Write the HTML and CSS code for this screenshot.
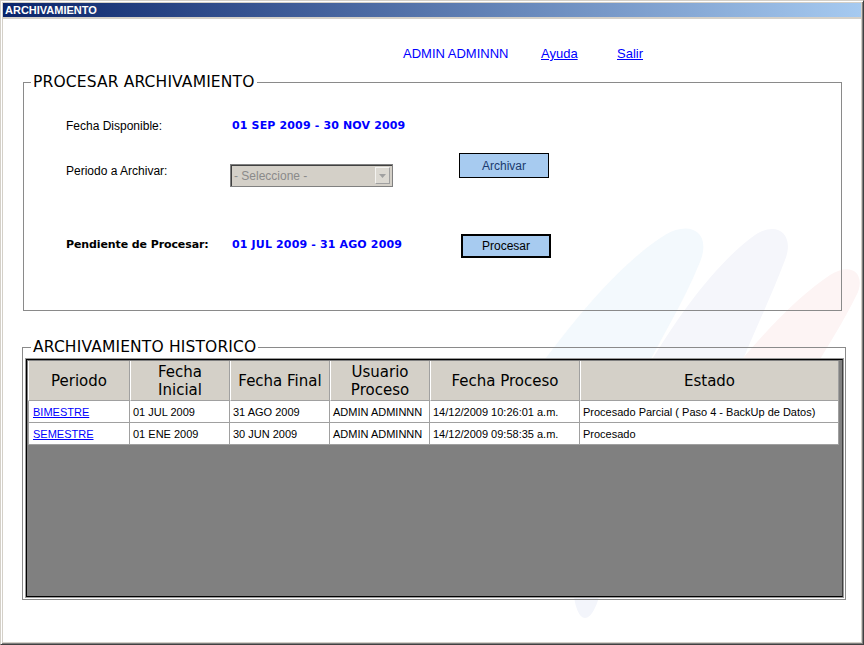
FILE: index.html
```html
<!DOCTYPE html>
<html lang="es">
<head>
<meta charset="utf-8">
<title>ARCHIVAMIENTO</title>
<link rel="stylesheet" href="styles.css">
</head>
<body>
<div class="window">
  <svg class="watermark" width="864" height="645" viewBox="0 0 864 645" aria-hidden="true">
    <path fill="#f3f9fd" d="M530 380 C580 310 625 260 665 235 C690 220 712 232 700 262 C685 300 660 340 640 380 Z"/>
    <path fill="#f5f6fb" d="M640 380 C680 310 720 260 755 235 C778 220 795 235 785 260 C770 300 750 340 735 380 Z"/>
    <path fill="#fdf4f4" d="M725 380 C765 330 800 295 830 275 C850 262 865 272 858 292 C845 320 825 350 808 380 Z"/>
    <path fill="#f3f5fb" d="M574 596 L599 596 C597 606 591 618 585 618 C579 618 575 606 574 596 Z"/>
  </svg>
  <div class="titlebar">ARCHIVAMIENTO</div>
  <div class="client">
    <nav class="toplinks">
      <span class="user">ADMIN ADMINNN</span>
      <a href="#" class="help">Ayuda</a>
      <a href="#">Salir</a>
    </nav>

    <fieldset class="box proc">
      <legend>PROCESAR ARCHIVAMIENTO</legend>
      <div class="form">
        <div class="lbl r1">Fecha Disponible:</div>
        <div class="val r1">01 SEP 2009 - 30 NOV 2009</div>
        <div class="r1"></div>

        <div class="lbl r2">Periodo a Archivar:</div>
        <div class="r2 selcell">
          <div class="select">
            <span class="seltext">- Seleccione -</span>
            <span class="selbtn"><svg width="7" height="4" viewBox="0 0 7 4"><path d="M0 0h7L3.5 4z" fill="#a0a0a0"/></svg></span>
          </div>
        </div>
        <div class="r2"><button class="btn archivar">Archivar</button></div>

        <div class="lbl strong r3">Pendiente de Procesar:</div>
        <div class="val r3">01 JUL 2009 - 31 AGO 2009</div>
        <div class="r3"><button class="btn procesar">Procesar</button></div>
      </div>
    </fieldset>

    <fieldset class="box hist">
      <legend>ARCHIVAMIENTO HISTORICO</legend>
      <div class="gridbox">
        <div class="gridarea">
          <table class="grid">
            <colgroup>
              <col class="c1"><col class="c2"><col class="c3"><col class="c4"><col class="c5"><col class="c6">
            </colgroup>
            <thead>
              <tr>
                <th>Periodo</th>
                <th>Fecha<br>Inicial</th>
                <th>Fecha Final</th>
                <th>Usuario<br>Proceso</th>
                <th>Fecha Proceso</th>
                <th>Estado</th>
              </tr>
            </thead>
            <tbody>
              <tr>
                <td><a href="#">BIMESTRE</a></td>
                <td>01 JUL 2009</td>
                <td>31 AGO 2009</td>
                <td>ADMIN ADMINNN</td>
                <td>14/12/2009 10:26:01 a.m.</td>
                <td>Procesado Parcial ( Paso 4 - BackUp de Datos)</td>
              </tr>
              <tr>
                <td><a href="#">SEMESTRE</a></td>
                <td>01 ENE 2009</td>
                <td>30 JUN 2009</td>
                <td>ADMIN ADMINNN</td>
                <td>14/12/2009 09:58:35 a.m.</td>
                <td>Procesado</td>
              </tr>
            </tbody>
          </table>
        </div>
      </div>
    </fieldset>
  </div>
</div>
</body>
</html>
```

FILE: styles.css
```css
html, body {
  margin: 0;
  padding: 0;
}
body {
  width: 864px;
  height: 645px;
  overflow: hidden;
  background: #ffffff;
  font-family: "Liberation Sans", Arial, sans-serif;
  font-size: 12px;
  color: #000;
}
.window {
  position: relative;
  box-sizing: border-box;
  width: 864px;
  height: 645px;
  background: #d4d0c8;
  border: 1px solid;
  border-color: #d4d0c8 #404040 #404040 #d4d0c8;
  box-shadow: inset 1px 1px 0 #ffffff, inset -1px -1px 0 #808080;
  padding: 2px;
  display: flex;
  flex-direction: column;
}
.watermark {
  position: absolute;
  left: -1px;
  top: -1px;
  z-index: 1;
  pointer-events: none;
}
.titlebar {
  height: 14px;
  line-height: 14px;
  padding-left: 2px;
  background: linear-gradient(to right, #0a246a, #a6caf0);
  color: #ffffff;
  font-weight: bold;
  font-size: 11px;
  margin-bottom: 2px;
}
.client {
  flex: 1;
  background: #ffffff;
}
.client > * {
  position: relative;
  z-index: 2;
}
.toplinks {
  display: flex;
  padding: 27px 0 0 400px;
  font-size: 13px;
  line-height: 16px;
  color: #0000ff;
}
.toplinks a {
  color: #0000ff;
}
.user {
  width: 138px;
}
.help {
  width: 76px;
}

.box {
  margin: 0;
  padding: 0;
  min-width: 0;
  border: 1px solid #8a8a8a;
  background: transparent;
}
.box legend {
  margin-left: 7px;
  padding: 0 2px;
  font-family: "DejaVu Sans", sans-serif;
  font-size: 15.5px;
  letter-spacing: 0.15px;
  line-height: 18px;
  color: #000;
}
.proc {
  margin: 11px 0 0 20px;
  width: 819px;
  box-sizing: border-box;
  padding: 25px 0 52px 0;
}
.form {
  display: grid;
  grid-template-columns: 164px 229px auto;
  grid-template-rows: 20px 34px 54px;
  row-gap: 17px;
  padding-left: 42px;
}
.lbl {
  line-height: 20px;
}
.r2.lbl {
  margin-top: 8px;
}
.r3.lbl, .r3.val {
  margin-top: 31px;
}
.form > .r3:last-child {
  margin-top: 30px;
}
.strong {
  font-family: "DejaVu Sans", sans-serif;
  font-weight: bold;
  font-size: 11px;
  letter-spacing: -0.1px;
}
.val {
  padding-left: 2px;
  line-height: 20px;
  font-family: "DejaVu Sans", sans-serif;
  font-weight: bold;
  font-size: 11px;
  letter-spacing: 0.15px;
  color: #0000ff;
}
.selcell {
  padding-top: 11px;
}
.select {
  box-sizing: border-box;
  width: 163px;
  height: 23px;
  background: #d4d0c8;
  border: 1px solid #808080;
  box-shadow: inset 1px 1px 0 #404040;
  display: flex;
  align-items: center;
  justify-content: space-between;
  padding: 0 2px 0 3px;
}
.seltext {
  color: #8a8a8a;
  font-size: 12px;
}
.selbtn {
  box-sizing: border-box;
  width: 15px;
  height: 17px;
  background: #dcd9d2;
  border: 1px solid;
  border-color: #f4f3f0 #a0a0a0 #a0a0a0 #f4f3f0;
  display: flex;
  align-items: center;
  justify-content: center;
}
.btn {
  box-sizing: border-box;
  width: 90px;
  height: 25px;
  margin: 0;
  padding: 0;
  background: #a7cbf0;
  font-family: "Liberation Sans", Arial, sans-serif;
  font-size: 12px;
  cursor: pointer;
}
.archivar {
  border: 1px solid #000;
  color: #1b3a6e;
}
.procesar {
  margin-left: 2px;
  height: 24px;
  border: 2px solid #000;
  color: #000;
}

.hist {
  margin: 27px 0 0 19px;
  width: 824px;
  box-sizing: border-box;
  padding: 2px 1px 1px 2px;
}
.hist legend {
  margin-left: 6px;
  letter-spacing: 0.15px;
}
.gridbox {
  box-sizing: border-box;
  height: 240px;
  border: 1px solid #9a9a9a;
}
.gridarea {
  box-sizing: border-box;
  height: 100%;
  border: 1px solid #000;
  border-right-color: #404040;
  background: #808080;
  padding: 1px 0 0 1px;
}
.grid {
  border-collapse: separate;
  border-spacing: 0;
  table-layout: fixed;
  width: 811px;
  background: #fff;
}
.c1 { width: 102px; }
.c2 { width: 100px; }
.c3 { width: 100px; }
.c4 { width: 100px; }
.c5 { width: 150px; }
.c6 { width: 259px; }
.grid th {
  height: 40px;
  box-sizing: border-box;
  padding: 0;
  background: #d4d0c8;
  border-left: 1px solid #ffffff;
  border-right: 1px solid #a0a0a0;
  border-bottom: 1px solid #a0a0a0;
  font-family: "DejaVu Sans", sans-serif;
  font-weight: normal;
  font-size: 15px;
  line-height: 18px;
  text-align: center;
  vertical-align: middle;
}
.grid td {
  height: 22px;
  box-sizing: border-box;
  padding: 0 0 0 3px;
  border-right: 1px solid #a0a0a0;
  border-bottom: 1px solid #a0a0a0;
  font-size: 11px;
  white-space: nowrap;
  overflow: hidden;
}
.grid td:first-child {
  border-left: 1px solid #a0a0a0;
  padding-left: 4px;
}
.grid td a {
  color: #0000ff;
}
```
